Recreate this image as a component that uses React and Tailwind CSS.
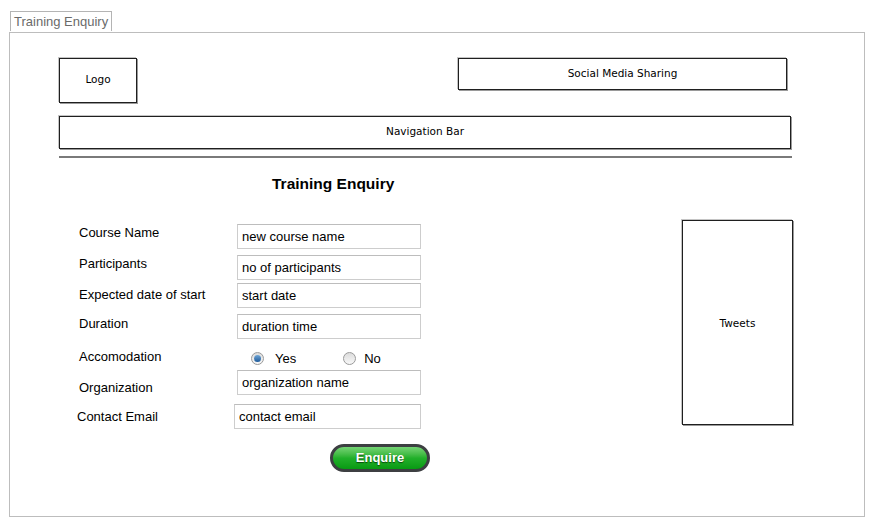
import React from 'react';

const sketchFont = { fontFamily: '"Comic Sans MS", "DejaVu Sans", sans-serif' };

/* sketchy wireframe box */
const SketchBox = ({ className = '', children }) => (
  <div
    className={`flex items-center justify-center border border-[#1f1f1f] shadow-[1px_1px_0_#9a9a9a,-1px_-1px_0_#c4c4c4] text-[10.5px] text-black ${className}`}
    style={sketchFont}
  >
    {children}
  </div>
);

const rows = [
  { label: 'Course Name', value: 'new course name', mt: 'mt-[31px]', lpt: 'pt-[1px]' },
  { label: 'Participants', value: 'no of participants', mt: 'mt-[6px]', lpt: 'pt-[1px]' },
  { label: 'Expected date of start', value: 'start date', mt: 'mt-[3px]', lpt: 'pt-[4px]' },
  { label: 'Duration', value: 'duration time', mt: 'mt-[6px]', lpt: 'pt-[2px]' },
];

const Field = ({ label, value, mt, lpt }) => (
  <div className={`flex items-start ${mt}`}>
    <div className={`w-[178px] pl-[20px] leading-[15px] ${lpt}`}>{label}</div>
    <input
      readOnly
      defaultValue={value}
      className="w-[184px] h-[25px] border border-[#cdcdcd] border-t-[#bdbdbd] px-[4px] text-[13px] text-black outline-none"
    />
  </div>
);

const Radio = ({ checked }) => (
  <span className="w-[13px] h-[13px] rounded-full border border-[#9a9a9a] bg-gradient-to-b from-[#dcdcdc] to-[#f8f8f8] flex items-center justify-center">
    {checked && (
      <span className="w-[7px] h-[7px] rounded-full bg-gradient-to-b from-[#6fa6d6] to-[#1c5a9a]" />
    )}
  </span>
);

export default function App() {
  return (
    <div
      className="w-[875px] h-[523px] bg-white pt-[11px] pl-[9px] text-[13px] text-black"
      style={{ fontFamily: '"Liberation Sans", Arial, sans-serif' }}
    >
      {/* tab */}
      <div className="ml-[1px] inline-flex h-[20px] items-center border border-b-0 border-[#b4b4b4] px-[3px] text-[13px] text-[#6a6a6a] leading-none">
        Training Enquiry
      </div>

      {/* panel */}
      <div className="w-[856px] h-[485px] border border-[#bdbdbd] pt-[25px] pl-[49px]">
        {/* header */}
        <div className="flex items-start">
          <SketchBox className="w-[78px] h-[45px]">Logo</SketchBox>
          <SketchBox className="ml-[321px] w-[329px] h-[32px]">Social Media Sharing</SketchBox>
        </div>

        <SketchBox className="mt-[13px] w-[732px] h-[33px]">Navigation Bar</SketchBox>

        <div className="mt-[7px] w-[733px] h-[2px] bg-[#7a7a7a]" />

        <div className="flex items-start">
          {/* form */}
          <div className="w-[400px]">
            <h1 className="mt-[17px] pl-[213px] text-[15.5px] font-bold leading-[18px]">Training Enquiry</h1>

            {rows.map((r) => (
              <Field key={r.label} {...r} />
            ))}

            <div className="mt-[9px] flex items-center h-[22px]">
              <div className="w-[178px] pl-[20px] leading-[15px] -mt-[4px]">Accomodation</div>
              <div className="ml-[14px] flex items-center gap-[11px]">
                <Radio checked />
                <span>Yes</span>
              </div>
              <div className="ml-[47px] flex items-center gap-[8px]">
                <Radio />
                <span>No</span>
              </div>
            </div>

            <Field label="Organization" value="organization name" mt="mt-[0px]" lpt="pt-[10px]" />

            <div className="mt-[9px] flex items-start">
              <div className="w-[175px] pl-[18px] pt-[5px] leading-[15px]">Contact Email</div>
              <input
                readOnly
                defaultValue="contact email"
                className="w-[187px] h-[25px] border border-[#cdcdcd] border-t-[#bdbdbd] px-[4px] text-[13px] text-black outline-none"
              />
            </div>

            <div className="mt-[15px] pl-[271px]">
              <button
                type="button"
                className="w-[100px] h-[28px] rounded-full border-[3px] border-[#3d3f42] bg-gradient-to-b from-[#74d474] via-[#21b02a] to-[#079a12] text-[13px] font-bold text-white [text-shadow:0_1px_1px_#0a4a0a] leading-none"
              >
                Enquire
              </button>
            </div>
          </div>

          {/* tweets */}
          <SketchBox className="ml-[223px] mt-[62px] w-[111px] h-[205px]">
            <span className="mt-[3px]">Tweets</span>
          </SketchBox>
        </div>
      </div>
    </div>
  );
}
